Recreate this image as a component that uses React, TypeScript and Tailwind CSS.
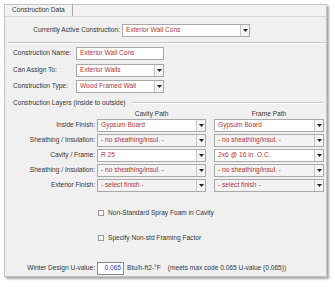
import React from "react";

const font = { fontFamily: '"Liberation Sans", Arial, sans-serif' };

function Arrow() {
  return (
    <div className="w-[9px] h-full flex items-center justify-center border-l border-[#c8c8c8] bg-[#f4f4f4]">
      <svg width="5" height="3" viewBox="0 0 5 3">
        <path d="M0 0 L5 0 L2.5 3 Z" fill="#222" />
      </svg>
    </div>
  );
}

function Select({ value, w, gray }: { value: string; w: string; gray?: boolean }) {
  return (
    <div
      className={`${w} h-[13px] flex border border-[#a9a9a9] ${gray ? "bg-[#f3f3f3]" : "bg-white"}`}
    >
      <div className="flex-1 flex items-center pl-[3px] text-[#b03535] whitespace-nowrap overflow-hidden">
        {value}
      </div>
      <Arrow />
    </div>
  );
}

function LayerRow({
  label,
  cav,
  frame,
  gray,
}: {
  label: string;
  cav: string;
  frame: string;
  gray?: boolean;
}) {
  return (
    <div className="flex items-center h-[13px]">
      <div className="w-[92px] pr-[2px] text-right whitespace-nowrap">{label}</div>
      <Select value={cav} w="w-[109px]" gray={gray} />
      <div className="w-[8px]" />
      <Select value={frame} w="w-[110px]" gray={gray} />
    </div>
  );
}

function Check({ label }: { label: string }) {
  return (
    <div className="flex items-center h-[10px] pl-[93px]">
      <div className="w-[6px] h-[6px] border border-[#9a9a9a] bg-white" />
      <div className="ml-[4px] whitespace-nowrap">{label}</div>
    </div>
  );
}

export default function App() {
  return (
    <div
      className="w-[335px] h-[287px] bg-white pt-[4px] pl-[4px] text-[6.6px] leading-none text-[#363636]"
      style={font}
    >
      <div className="w-[323px] h-[273px] bg-[#f0f0f0] border border-[#c4c4c4] shadow-[2px_2px_2px_rgba(0,0,0,0.35)] flex flex-col">
        {/* tab row */}
        <div className="h-[12px] flex border-b border-[#d6d6d6] bg-[#f3f3f3]">
          <div className="px-[7px] flex items-center border-r border-[#a8a8a8]">
            Construction Data
          </div>
        </div>

        {/* active construction */}
        <div className="mt-[7px] flex items-center h-[13px]">
          <div className="w-[117px] pr-[2px] text-right whitespace-nowrap">
            Currently Active Construction:
          </div>
          <Select value="Exterior Wall Cons" w="w-[128px]" />
        </div>

        <div className="mt-[5px] ml-[3px] h-[2px] border-t border-[#c9c9c9] border-b border-b-white" />

        {/* name */}
        <div className="mt-[3px] flex items-center h-[13px] pl-[8px]">
          <div className="w-[63px] whitespace-nowrap">Construction Name:</div>
          <div className="w-[88px] h-[13px] flex items-center border border-[#a9a9a9] bg-white pl-[3px] text-[#b03535]">
            Exterior Wall Cons
          </div>
        </div>
        <div className="mt-[4px] flex items-center h-[13px] pl-[8px]">
          <div className="w-[63px] whitespace-nowrap">Can Assign To:</div>
          <Select value="Exterior Walls" w="w-[88px]" />
        </div>
        <div className="mt-[3px] flex items-center h-[13px] pl-[8px]">
          <div className="w-[63px] whitespace-nowrap">Construction Type:</div>
          <Select value="Wood Framed Wall" w="w-[88px]" />
        </div>

        {/* layers header */}
        <div className="mt-[4px] flex items-center h-[12px] pl-[8px] pr-[3px]">
          <div className="whitespace-nowrap">Construction Layers (inside to outside)</div>
          <div className="flex-1 ml-[6px] h-[2px] border-t border-[#c9c9c9] border-b border-b-white" />
        </div>
        <div className="flex items-center h-[10px]">
          <div className="w-[92px]" />
          <div className="w-[109px] text-center">Cavity Path</div>
          <div className="w-[8px]" />
          <div className="w-[110px] text-center">Frame Path</div>
        </div>

        <div className="flex flex-col gap-[2px]">
          <LayerRow label="Inside Finish:" cav="Gypsum Board" frame="Gypsum Board" />
          <LayerRow
            label="Sheathing / Insulation:"
            cav="- no sheathing/insul. -"
            frame="- no sheathing/insul. -"
            gray
          />
          <LayerRow label="Cavity / Frame:" cav="R 25" frame="2x6 @ 16 in. O.C." />
          <LayerRow
            label="Sheathing / Insulation:"
            cav="- no sheathing/insul. -"
            frame="- no sheathing/insul. -"
            gray
          />
          <LayerRow
            label="Exterior Finish:"
            cav="- select finish -"
            frame="- select finish -"
            gray
          />
        </div>

        <div className="mt-[16px]">
          <Check label="Non-Standard Spray Foam in Cavity" />
        </div>
        <div className="mt-[15px]">
          <Check label="Specify Non-std Framing Factor" />
        </div>

        <div className="mt-[19px] flex items-center h-[13px]">
          <div className="w-[92px] pr-[2px] text-right whitespace-nowrap">Winter Design U-value:</div>
          <div className="w-[27px] h-[13px] flex items-center justify-end pr-[2px] border border-[#8a8a8a] bg-white text-[#2a3fbf]">
            0.065
          </div>
          <div className="ml-[3px] whitespace-nowrap">Btu/h-ft2-°F</div>
          <div className="ml-[7px] whitespace-nowrap">(meets max code 0.065 U-value (0.065))</div>
        </div>
      </div>
    </div>
  );
}
